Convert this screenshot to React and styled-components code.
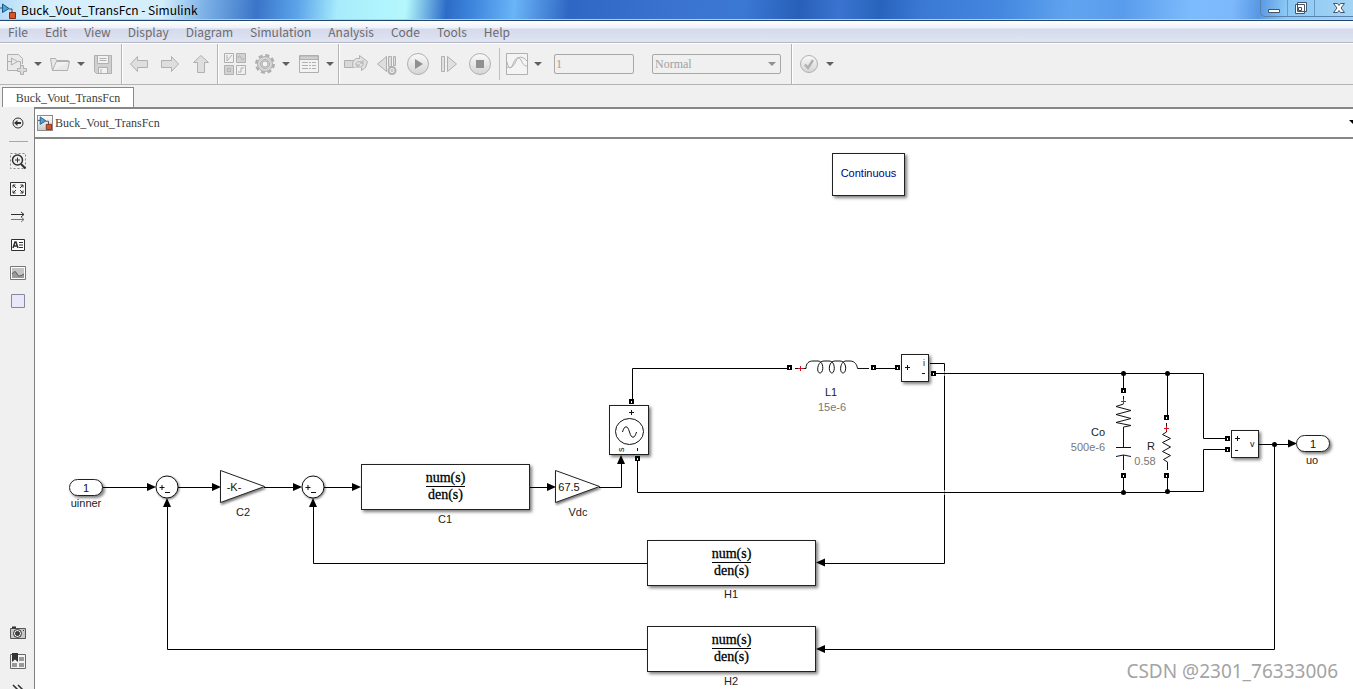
import React, { useState } from "react";
import styled, { createGlobalStyle, css } from "styled-components";

const GlobalStyle = createGlobalStyle`
  * {
    box-sizing: border-box;
  }
  body {
    margin: 0;
    background: #f0f0f0;
    font-family: "Liberation Sans", Arial, sans-serif;
  }
  button {
    padding: 0;
    border: 0;
    background: none;
    font: inherit;
    color: inherit;
  }
`;

const menus = ["File", "Edit", "View", "Display", "Diagram", "Simulation", "Analysis", "Code", "Tools", "Help"];

// the diagram is stored in window coordinates, the canvas starts here
const ORIGIN = { x: 35, y: 139 };

const labels = [
  { text: "uinner", x: 86, y: 503 },
  { text: "C2", x: 243, y: 512 },
  { text: "C1", x: 445, y: 519 },
  { text: "Vdc", x: 578, y: 512 },
  { text: "H1", x: 731, y: 594 },
  { text: "H2", x: 731, y: 681 },
  { text: "L1", x: 831, y: 392 },
  { text: "15e-6", x: 832, y: 407, param: true },
  { text: "Co", x: 1098, y: 432 },
  { text: "500e-6", x: 1088, y: 447, param: true },
  { text: "R", x: 1151, y: 446 },
  { text: "0.58", x: 1145, y: 461, param: true },
  { text: "uo", x: 1312, y: 460 },
];

const transferFcns = [
  { id: "C1", x: 361, y: 464, w: 169 },
  { id: "H1", x: 647, y: 540, w: 169 },
  { id: "H2", x: 647, y: 626, w: 169 },
];

const wires = [
  "M102 487.5H148",
  "M178 487.5H213",
  "M264 487.5H294",
  "M324 487.5H353",
  "M530 487.5H548",
  "M599 487.5H621.5V463",
  "M632.5 401V368.5H789",
  "M873 368.5H897",
  "M930 363.5H944.5V563.5H824",
  "M933 373.5H1203.5V438.5H1227",
  "M637.5 458V492.5H1167.5V491.5H1203.5V449.5H1227",
  "M1123.5 373V390M1123.5 475V492",
  "M1167.5 373V417M1167.5 475V491",
  "M1259 444.5H1289",
  "M1274.5 444V649.5H824",
  "M648 563.5H313.5V506",
  "M648 649.5H167.5V506",
];

const arrows = [
  [156, 487, 0],
  [221, 487, 0],
  [302, 487, 0],
  [361, 487, 0],
  [556, 487, 0],
  [1297, 443.5, 0],
  [621, 455, -90],
  [313, 498, -90],
  [167, 498, -90],
  [816, 562.5, 180],
  [816, 649, 180],
];

const ports = [
  [631, 401], [637, 458], [789, 367], [873, 367], [897, 367], [933, 373],
  [1123, 390], [1123, 475], [1166, 417], [1166, 475], [1227, 438], [1227, 449],
];

const dots = [[1123.5, 373.5], [1167.5, 373.5], [1123.5, 492.5], [1167.5, 491.5], [1274.5, 444.5]];

const ModelIcon = () => (
  <svg width="16" height="16" viewBox="0 0 16 16">
    <path d="M0 5h3M9 6h3v4" fill="none" stroke="#444" />
    <path d="M2.500 1v8.500L9 5.500z" fill="#4aa5d8" stroke="#1b5784" />
    <path d="M9.500 9.500h6v6h-6z" fill="#d9532a" stroke="#7d2a12" />
  </svg>
);

const CaretIcon = () => (
  <svg width="8" height="4" viewBox="0 0 8 4">
    <path d="M0 0h8L4 4z" fill="currentColor" />
  </svg>
);

const Icon = ({ children, size = 22 }) => (
  <svg width={size} height={size} viewBox={`0 0 ${size} ${size}`} fill="none" stroke="currentColor">
    {children}
  </svg>
);

const NewIcon = () => (
  <Icon>
    <path d="M17.500 12V6.500l-4-4h-11v16h11" transform="translate(-1 -1)" fill="#e9e9e9" />
    <path d="M2 8.500h3M5.500 5v7l6-3.500zM11 8.500h3.500v4" />
    <path d="M14.500 12.500h3v3h3v3h-3v3h-3v-3h-3v-3h3z" fill="#dcdcdc" />
  </Icon>
);

const OpenIcon = () => (
  <Icon>
    <path d="M3.500 17.500l-2-12h5l1 2h12v2M3.500 17.500h15l2-9h-13l-1.500 3z" fill="#e8e8e8" />
  </Icon>
);

const SaveIcon = () => (
  <Icon>
    <path d="M2.500 2.500h17v18h-15l-2-2z" fill="#d0d0d0" />
    <path d="M5.500 2.500h11v8h-11zM6.500 14.500h9v6h-9z" fill="#f2f2f2" />
    <path d="M7.500 5.500h7M7.500 7.500h7M9 16v4" />
  </Icon>
);

const ArrowIcon = ({ turn }) => (
  <Icon>
    <path d="M2.500 11l7-7.500v4h10v7h-10v4z" fill="#dedede" transform={`rotate(${turn} 11 11)`} />
  </Icon>
);

const LibraryIcon = () => (
  <Icon>
    <path d="M.500.500h9v9h-9zM12.500 12.500h9v9h-9z" />
    <path d="M12.500.500h9v9h-9zM.500 12.500h9v9h-9z" fill="#d2d2d2" />
    <path d="M3 2v6l5-6M14 5c1-4 2-2 3 0s2 3 3 0M3.500 15.500h3v3h-3zM14 19h3v-4h3" />
  </Icon>
);

const GearIcon = () => (
  <Icon>
    <circle cx="11" cy="11" r="8.500" strokeWidth="3" strokeDasharray="4 2.676" />
    <circle cx="11" cy="11" r="7.500" fill="#d6d6d6" />
    <circle cx="11" cy="11" r="4.500" />
    <circle cx="11" cy="11" r="3" fill="#f3f3f3" />
  </Icon>
);

const ExplorerIcon = () => (
  <Icon>
    <path d="M1.500 2.500h19v17h-19z" fill="#f2f2f2" />
    <path d="M2 3h18v3.500H2z" fill="#d0d0d0" />
    <path d="M4 9.500h14M4 12.500h14M4 15.500h14" strokeDasharray="6 1 2 1" />
  </Icon>
);

const UpdateIcon = () => (
  <Icon size={24}>
    <path d="M.500 8.500h11v7H.500z" fill="#d8d8d8" />
    <path d="M9.500 15.500c-2-2-1-8 3-9h3v-3l8 6-2 6-4 3v-3" fill="#e2e2e2" />
    <path d="M12 13c-1-4 6-4 7-2M19 11c1 5-6 5-6 2M19 8v3h-3M13 16v-3h3" />
  </Icon>
);

const StepBackIcon = () => (
  <Icon>
    <path d="M1.500 11l9-7.500v15zM12.500 3.500h3v10h-3zM17.500 3.500h2v9h-2z" fill="#dedede" />
    <circle cx="16" cy="17.500" r="3.500" strokeWidth="2" fill="#f0f0f0" />
    <circle cx="16" cy="17.500" r="1" />
  </Icon>
);

const RoundIcon = ({ children }) => (
  <Icon>
    <circle cx="11" cy="11" r="10.500" fill="url(#bead)" />
    {children}
  </Icon>
);

const StepIcon = () => (
  <Icon>
    <path d="M3.500 3.500h3v15h-3zM9.500 3.500v15l9-7.500z" fill="#e0e0e0" />
  </Icon>
);

const ScopeIcon = () => (
  <Icon>
    <path d="M.500.500h21v21H.500z" fill="#f4f4f4" />
    <path d="M1 9c1 6 4 8 6 2 2-5 5-9 8-4 2 4 3 6 6 6M1 14c4 2 7-1 9-6s7-5 11 0" />
  </Icon>
);

const CheckIcon = () => (
  <Icon>
    <circle cx="11" cy="11" r="8.500" fill="url(#bead)" />
    <path d="M7 11.500l3 3.500 5-8" strokeWidth="2.500" />
  </Icon>
);

const sideTop = [
  { name: "Zoom", draw: (
    <>
      <path d="M1.500 1.500h15v15h-15z" stroke="#888" strokeDasharray="2 2" />
      <circle cx="8.500" cy="8" r="5" strokeWidth="1.500" />
      <path d="M12 12l4.500 4.500" strokeWidth="2" />
      <path d="M6 8h5M8.500 5.500v5" />
    </>
  ) },
  { name: "Fit to view", draw: (
    <>
      <path d="M1.500 2.500h15v13h-15z" fill="#f8f8f8" />
      <path d="M4 7.500V5h2.500M4 5l3 3M11.500 5H14v2.500M14 5l-3 3M4 10.500V13h2.500M4 13l3-3M11.500 13H14v-2.500M14 13l-3-3" />
    </>
  ) },
  { name: "Sample time", draw: (
    <>
      <path d="M2 6.500h13M12 4l3 2.500L12 9" />
      <path d="M2 11.500h13M12 9l3 2.500-3 2.500" stroke="#777" />
    </>
  ) },
  { name: "Annotation", draw: (
    <>
      <path d="M2.500 3.500h13v11h-13z" fill="#fff" />
      <path d="M4 12l2-6h1l2 6M5 10h3" strokeWidth="1.500" />
      <path d="M10 6.500h4M10 9h4M10 11.500h4" />
    </>
  ) },
  { name: "Image", draw: (
    <>
      <path d="M1.500 2.500h15v13h-15z" stroke="#777" fill="#fff" />
      <path d="M3 4h12v10H3z" fill="#c4c4c4" stroke="none" />
      <path d="M3 14v-4c2-3 4-3 5 0s4 2 7 0v4z" fill="#9a9a9a" stroke="none" />
      <path d="M3 10c2-3 4-3 5 0s4 2 7 0" stroke="#555" />
    </>
  ) },
  { name: "Area", draw: <path d="M2.500 2.500h13v13h-13z" fill="#e8e8fa" stroke="#88889c" /> },
];

const sideBottom = [
  { name: "Screenshot", draw: (
    <>
      <path d="M1.500 4.500h15v10h-15z" fill="#c8c8c8" stroke="#555" />
      <path d="M3 3.500h4" strokeWidth="2" />
      <circle cx="8.500" cy="9.500" r="4" fill="#eee" />
      <circle cx="8.500" cy="9.500" r="2" fill="#444" />
      <path d="M14 6.500h1" />
    </>
  ) },
  { name: "Bookmarks", draw: (
    <>
      <path d="M1.500 2.500h15v14h-15z" fill="#f4f4f4" stroke="#666" />
      <path d="M10 5h5v4h-5zM3 11h5v4H3zM10 11h5v4h-5z" fill="#999" stroke="none" />
      <path d="M3 1h6v9L6 7.500 3 10z" fill="#333" stroke="none" />
    </>
  ) },
  { name: "More", draw: <path d="M4 5l5 5-5 5M9 5l5 5-5 5" strokeWidth="1.500" /> },
];

const Wiring = () => (
  <WireLayer viewBox="35 139 1318 550">
    {wires.map((d) => (
      <path key={d} d={d} stroke="#000" />
    ))}
    {/* lines passing over each other */}
    <path d="M944.500 371v2M944.500 374v2M944.500 490v2M944.500 493v2" stroke="#fff" opacity="0.600" />
    {arrows.map(([x, y, turn]) => (
      <path key={`${x}-${y}`} d="M0 0L-9 -4V4z" fill="#000" transform={`translate(${x} ${y}) rotate(${turn})`} />
    ))}
    {dots.map(([x, y]) => (
      <circle key={`${x}-${y}`} cx={x} cy={y} r="2.500" fill="#000" />
    ))}
    {ports.map(([x, y]) => (
      <g key={`${x}-${y}`}>
        <path d={`M${x - 2} ${y - 2}h5v5h-5z`} fill="#000" />
        <path d={`M${x} ${y}h1v2h-1z`} fill="#fff" />
      </g>
    ))}
    {/* inductor */}
    <path
      d="M795 368.500H806C806 363 809 361 813 361H818C824 361 824 373 820 373C816 373 817 361 824 361H829C836 361 835 373 832 373C828 373 828 361 835 361H840C847 361 847 373 843 373C839 373 840 361 846 361H850C855 361 857 365 857.500 368.500H869"
      stroke="#111"
    />
    {/* capacitor branch */}
    <path d="M1123.500 396V404L1116 406.500L1131 410.500L1116 414.500L1131 418.500L1116 422.500L1131 425.500L1123.500 427V447M1116 447.500H1131M1116 456.500Q1123.500 453.500 1131 456.500M1123.500 455V470" stroke="#111" />
    {/* load */}
    <path d="M1166.500 423V432L1162.500 434.500L1170.500 438.500L1162.500 442.500L1170.500 447L1162.500 451.500L1170.500 455.500L1163.500 459.500L1167.500 462V470" stroke="#111" />
    <path d="M798 368.500H804M800.500 366V371M1121 401.500H1126M1123.500 399V404M1164 428.500H1169M1166.500 426V431" stroke="#d01020" />
  </WireLayer>
);

const TransferFcn = ({ block }) => (
  <Block $x={block.x} $y={block.y} $w={block.w} $h={46}>
    <Fraction>
      <span>num(s)</span>
      <span>den(s)</span>
    </Fraction>
  </Block>
);

const Gain = ({ x, y, children }) => (
  <GainBox $x={x} $y={y}>
    <svg width="46" height="34" viewBox="0 0 46 34">
      <path d="M.500.500v32L44.500 16.500z" fill="#fff" stroke="#222" />
    </svg>
    <span>{children}</span>
  </GainBox>
);

const Sum = ({ x, y }) => (
  <SumBox $x={x} $y={y}>
    <svg width="24" height="24" viewBox="0 0 24 24" fill="none" stroke="#111">
      <circle cx="12" cy="12" r="11" fill="#fff" />
      <path d="M4.500 12.500h5M7 10v5M10 17.500h5" />
    </svg>
  </SumBox>
);

export default function App() {
  const [stopTime, setStopTime] = useState("1");

  return (
    <>
      <GlobalStyle />
      <Window>
        <TitleBar>
          <ModelIcon />
          <h1>Buck_Vout_TransFcn - Simulink</h1>
          <WindowButtons>
            <button aria-label="Minimize">
              <svg width="14" height="14" viewBox="0 0 14 14" fill="#fff" stroke="#42536a">
                <path d="M1.500 8.500h11v3h-11z" />
              </svg>
            </button>
            <button aria-label="Restore">
              <svg width="14" height="14" viewBox="0 0 14 14" fill="#fff" stroke="#42536a">
                <path d="M3.500 1.500h9v9h-9zM1.500 3.500h9v9h-9zM4.500 6.500h3v3h-3z" />
              </svg>
            </button>
            <button aria-label="Close">
              <svg width="14" height="14" viewBox="0 0 14 14" fill="#fff" stroke="#42536a">
                <path d="M1.500 2.500h4L7 4.500l1.500-2h4L9 7l3.500 4.500h-4L7 9.500l-1.500 2h-4L5 7z" />
              </svg>
            </button>
          </WindowButtons>
        </TitleBar>
        <MenuBar>
          {menus.map((menu) => (
            <button key={menu}>{menu}</button>
          ))}
        </MenuBar>
        <Toolbar>
          <svg width="0" height="0">
            <linearGradient id="bead" x2="0" y2="1">
              <stop offset="0" stopColor="#fafafa" />
              <stop offset="1" stopColor="#d4d4d4" />
            </linearGradient>
          </svg>
          <ToolGroup $gap={7} $end={7}>
            <Split>
              <ToolButton aria-label="New model"><NewIcon /></ToolButton>
              <CaretButton aria-label="New options"><CaretIcon /></CaretButton>
            </Split>
            <Split>
              <ToolButton aria-label="Open"><OpenIcon /></ToolButton>
              <CaretButton aria-label="Open options"><CaretIcon /></CaretButton>
            </Split>
            <ToolButton aria-label="Save"><SaveIcon /></ToolButton>
          </ToolGroup>
          <ToolGroup $gap={9} $end={5}>
            <ToolButton aria-label="Back"><ArrowIcon turn={0} /></ToolButton>
            <ToolButton aria-label="Forward"><ArrowIcon turn={180} /></ToolButton>
            <ToolButton aria-label="Up to parent"><ArrowIcon turn={90} /></ToolButton>
          </ToolGroup>
          <ToolGroup $gap={8} $end={4}>
            <ToolButton aria-label="Library browser"><LibraryIcon /></ToolButton>
            <Split>
              <ToolButton aria-label="Model configuration"><GearIcon /></ToolButton>
              <CaretButton aria-label="Configuration options"><CaretIcon /></CaretButton>
            </Split>
            <Split>
              <ToolButton aria-label="Model explorer"><ExplorerIcon /></ToolButton>
              <CaretButton aria-label="Explorer options"><CaretIcon /></CaretButton>
            </Split>
          </ToolGroup>
          <ToolGroup $gap={9} $end={8} $open>
            <ToolButton aria-label="Update diagram"><UpdateIcon /></ToolButton>
            <ToolButton aria-label="Step back"><StepBackIcon /></ToolButton>
            <ToolButton aria-label="Run">
              <RoundIcon><path d="M8 6v10l8-5z" fill="#909090" stroke="none" /></RoundIcon>
            </ToolButton>
            <ToolButton aria-label="Step forward"><StepIcon /></ToolButton>
            <ToolButton aria-label="Stop">
              <RoundIcon><path d="M7 7h8v8H7z" fill="#909090" stroke="none" /></RoundIcon>
            </ToolButton>
          </ToolGroup>
          <ShortRule />
          <ToolGroup $gap={12} $end={10}>
            <Split>
              <ToolButton aria-label="Data inspector"><ScopeIcon /></ToolButton>
              <CaretButton aria-label="Inspector options"><CaretIcon /></CaretButton>
            </Split>
            <Fields>
              <StopTime aria-label="Stop time" value={stopTime} onChange={(e) => setStopTime(e.target.value)} />
              <ModeSelect>
                <select aria-label="Simulation mode">
                  <option>Normal</option>
                </select>
                <CaretIcon />
              </ModeSelect>
            </Fields>
          </ToolGroup>
          <ToolGroup $gap={7} $end={6} $open>
            <Split>
              <ToolButton aria-label="Model advisor"><CheckIcon /></ToolButton>
              <CaretButton aria-label="Advisor options"><CaretIcon /></CaretButton>
            </Split>
          </ToolGroup>
        </Toolbar>
        <TabStrip>
          <Tab>Buck_Vout_TransFcn</Tab>
        </TabStrip>
        <Body>
          <Sidebar>
            <SideGroup>
              <SideButton aria-label="Hide browser">
                <Icon size={18}>
                  <circle cx="9" cy="9" r="5" />
                  <path d="M12 9H6" strokeWidth="2" />
                  <path d="M5 9l3.500-3v6z" fill="currentColor" stroke="none" />
                </Icon>
              </SideButton>
              <SideRule />
              {sideTop.map((tool) => (
                <SideButton key={tool.name} aria-label={tool.name}>
                  <Icon size={18}>{tool.draw}</Icon>
                </SideButton>
              ))}
            </SideGroup>
            <SideGroup $bottom>
              {sideBottom.map((tool) => (
                <SideButton key={tool.name} aria-label={tool.name}>
                  <Icon size={18}>{tool.draw}</Icon>
                </SideButton>
              ))}
            </SideGroup>
          </Sidebar>
          <Editor>
            <Breadcrumb>
              <CrumbIcon><ModelIcon /></CrumbIcon>
              <span>Buck_Vout_TransFcn</span>
              <button aria-label="Model history"><CaretIcon /></button>
            </Breadcrumb>
            <Canvas>
              <Wiring />
              <Block $x={832} $y={153} $w={73} $h={43} $link>Continuous</Block>
              {transferFcns.map((block) => (
                <TransferFcn key={block.id} block={block} />
              ))}
              <Block $x={69} $y={479} $w={34} $h={17} $round>1</Block>
              <Block $x={1296} $y={435} $w={34} $h={17} $round>1</Block>
              <Sum x={155} y={475} />
              <Sum x={301} y={475} />
              <Gain x={220} y={470}>-K-</Gain>
              <Gain x={555} y={470}>67.5</Gain>
              <Block $x={609} $y={405} $w={40} $h={50}>
                <svg width="38" height="48" viewBox="0 0 38 48" fill="none" stroke="#111">
                  <path d="M19 6.500h5M21.500 4v5M27.500 42v3" />
                  <ellipse cx="19.500" cy="25.500" rx="14" ry="13" />
                  <path d="M12.500 26c2-7 5-7 7 0s5 7 7 0" />
                  <PortText x="-46" y="14" transform="rotate(-90)">s</PortText>
                </svg>
              </Block>
              <Block $x={901} $y={354} $w={28} $h={28}>
                <svg width="26" height="26" viewBox="0 0 26 26" fill="none" stroke="#111">
                  <path d="M3 12.500h5M5.500 10v5M20 18.500h3" />
                  <PortText x="21" y="11">i</PortText>
                </svg>
              </Block>
              <Block $x={1231} $y={430} $w={28} $h={28}>
                <svg width="26" height="26" viewBox="0 0 26 26" fill="none" stroke="#111">
                  <path d="M3 7.500h5M5.500 5v5M3 19.500h3" />
                  <PortText x="18" y="16">v</PortText>
                </svg>
              </Block>
              {labels.map((label) => (
                <Label key={label.text} $x={label.x} $y={label.y} $param={label.param}>
                  {label.text}
                </Label>
              ))}
              <Watermark>CSDN @2301_76333006</Watermark>
            </Canvas>
          </Editor>
        </Body>
      </Window>
    </>
  );
}

const Window = styled.div`
  display: flex;
  flex-direction: column;
  height: 100vh;
  overflow: hidden;
`;

const TitleBar = styled.header`
  display: flex;
  align-items: center;
  flex: none;
  height: 21px;
  gap: 5px;
  border-bottom: 1px solid #24466e;
  box-shadow: inset 0 -1px #a8d0f4;
  background: linear-gradient(
    95deg,
    #b4dcf8 0%,
    #d8f0fc 3%,
    #d4eefc 12%,
    #7fb4e8 15%,
    #3a74c8 19%,
    #5ba4ea 22%,
    #a8ecfc 25%,
    #b4f8fc 30%,
    #2c6cc8 33%,
    #3f86de 35%,
    #6ab4f8 38%,
    #2f68c4 42%,
    #3a74d0 50%,
    #3a78d4 55%,
    #2860b8 59%,
    #3a74d0 62%,
    #2864bc 65%,
    #3a78d4 68%,
    #4488e0 74%,
    #60a4f0 79%,
    #5a9cec 83%,
    #7cbcfc 88%,
    #7cb8fc 91%,
    #5898e4 93%,
    #8cc8f4 95%,
    #a4d4f4 100%
  );
  h1 {
    flex: 1;
    margin: 0;
    font: 12px/20px "Noto Sans CJK SC", "Noto Sans", sans-serif;
    color: #000;
  }
  > svg {
    flex: none;
    margin-top: 2px;
  }
`;

const WindowButtons = styled.div`
  display: flex;
  align-self: flex-start;
  height: 17px;
  border: 1px solid #5782b0;
  border-width: 0 0 1px 1px;
  border-radius: 0 0 0 5px;
  button {
    display: flex;
    align-items: center;
    justify-content: center;
    width: 27px;
    border-right: 1px solid #6c98c4;
  }
  button:last-child {
    width: 38px;
    padding-left: 10px;
    border-right: 0;
  }
`;

const MenuBar = styled.nav`
  display: flex;
  flex: none;
  gap: 17px;
  height: 22px;
  padding: 0 8px;
  border-bottom: 1px solid #b4b7c4;
  background: linear-gradient(#fff 0, #eef1f9 7px, #d4daec 8px, #e0e4f2 21px);
  font: 12px/22px "Noto Sans CJK SC", "Noto Sans", sans-serif;
  color: #6b6b6f;
`;

const Toolbar = styled.div`
  display: flex;
  align-items: center;
  flex: none;
  height: 42px;
  border-top: 1px solid #fff;
  border-bottom: 1px solid #b4b4b4;
  background: #f0f0f0;
  > svg {
    position: absolute;
  }
`;

const ToolGroup = styled.div`
  display: flex;
  align-items: center;
  align-self: stretch;
  gap: ${(p) => p.$gap}px;
  padding: 0 ${(p) => p.$end}px 0 6px;
  ${(p) =>
    !p.$open &&
    css`
      border-right: 1px solid #b4b4b4;
      box-shadow: 1px 0 #fff;
    `}
`;

const Split = styled.div`
  display: flex;
  align-items: center;
  gap: 6px;
`;

const ToolButton = styled.button`
  display: flex;
  align-items: center;
  justify-content: center;
  width: 22px;
  height: 24px;
  color: #b0b0b0;
  svg {
    flex: none;
  }
`;

const CaretButton = styled.button`
  display: flex;
  justify-content: center;
  width: 8px;
  color: #606060;
`;

const ShortRule = styled.span`
  width: 1px;
  height: 32px;
  background: #c0c0c0;
`;

const Fields = styled.div`
  display: flex;
  gap: 18px;
`;

const field = css`
  height: 20px;
  padding: 0 1px;
  border: 1px solid #a8a8a8;
  border-radius: 2px;
  background: #f0f0f0;
  font: 12px "Liberation Serif", serif;
  color: #a0a0a0;
`;

const StopTime = styled.input`
  ${field}
  width: 80px;
`;

const ModeSelect = styled.div`
  position: relative;
  select {
    ${field}
    display: block;
    width: 129px;
    padding-left: 2px;
    appearance: none;
  }
  svg {
    position: absolute;
    top: 8px;
    right: 5px;
    color: #909090;
    pointer-events: none;
  }
`;

const TabStrip = styled.div`
  display: flex;
  align-items: flex-end;
  flex: none;
  height: 22px;
  padding-left: 2px;
  background: #f0f0f0;
`;

const Tab = styled.button`
  width: 132px;
  height: 20px;
  border: 1px solid #888;
  border-bottom: 0;
  background: #fff;
  font: 12px/20px "Liberation Serif", serif;
  color: #404040;
`;

const Body = styled.div`
  display: flex;
  flex: 1;
  min-height: 0;
`;

const Sidebar = styled.aside`
  display: flex;
  flex-direction: column;
  justify-content: space-between;
  flex: none;
  width: 34px;
  padding-top: 2px;
  background: #f0f0f0;
`;

const SideGroup = styled.div`
  display: flex;
  flex-direction: column;
  align-items: center;
  padding-left: 2px;
  margin-bottom: ${(p) => (p.$bottom ? "-14px" : "0")};
`;

const SideButton = styled.button`
  display: flex;
  align-items: center;
  justify-content: center;
  width: 28px;
  height: 28px;
  color: #303030;
`;

const SideRule = styled.hr`
  width: 19px;
  height: 1px;
  margin: 4px 0 5px;
  border: 0;
  background: #a8a8a8;
`;

const Editor = styled.main`
  display: flex;
  flex-direction: column;
  flex: 1;
  min-width: 0;
  border-left: 1px solid #808080;
`;

const Breadcrumb = styled.div`
  display: flex;
  align-items: center;
  flex: none;
  gap: 2px;
  height: 32px;
  padding-left: 2px;
  overflow: hidden;
  border: solid #868686;
  border-width: 2px 0;
  background: #fff;
  font: 12px/16px "Liberation Serif", serif;
  color: #404040;
  button {
    display: flex;
    margin: 0 -4px 3px auto;
    color: #000;
  }
`;

const CrumbIcon = styled.span`
  display: flex;
  align-items: center;
  justify-content: center;
  width: 16px;
  height: 16px;
  border: 1px solid #8a8a8a;
  background: linear-gradient(#fff, #ccc);
  svg {
    width: 14px;
    height: 14px;
  }
`;

const Canvas = styled.section`
  position: relative;
  flex: 1;
  min-height: 0;
  overflow: hidden;
  background: #fff;
`;

const WireLayer = styled.svg`
  position: absolute;
  top: 0;
  left: 0;
  width: 1318px;
  height: 550px;
  fill: none;
`;

const PortText = styled.text`
  fill: #111;
  stroke: none;
  font-size: 9px;
`;

const placed = css`
  position: absolute;
  left: ${(p) => p.$x - ORIGIN.x}px;
  top: ${(p) => p.$y - ORIGIN.y}px;
`;

const Block = styled.div`
  ${placed}
  display: flex;
  align-items: center;
  justify-content: center;
  width: ${(p) => p.$w}px;
  height: ${(p) => p.$h}px;
  padding-bottom: ${(p) => (p.$link ? "3px" : "0")};
  border: 1px solid #222;
  border-radius: ${(p) => (p.$round ? "9px" : "0")};
  background: #fff;
  box-shadow: 2px 2px 3px rgba(0, 0, 0, 0.5);
  font-size: 11px;
  color: ${(p) => (p.$link ? "#000080" : "#111")};
  svg {
    flex: none;
  }
`;

const Fraction = styled.div`
  display: flex;
  flex-direction: column;
  align-items: center;
  padding-bottom: 1px;
  font: 14px/16px "Liberation Serif", serif;
  color: #000;
  -webkit-text-stroke: 0.3px #000;
  span:first-child {
    border-bottom: 1px solid #000;
  }
`;

const GainBox = styled.div`
  ${placed}
  width: 46px;
  height: 34px;
  font-size: 11px;
  line-height: 34px;
  color: #111;
  svg {
    position: absolute;
    top: 0;
    left: 0;
    overflow: visible;
    filter: drop-shadow(1px 2px 1px rgba(0, 0, 0, 0.5));
  }
  span {
    display: block;
    position: relative;
    width: 28px;
    text-align: center;
  }
`;

const SumBox = styled.div`
  ${placed}
  svg {
    display: block;
    overflow: visible;
    filter: drop-shadow(1px 1px 1px rgba(0, 0, 0, 0.5));
  }
`;

const Label = styled.span`
  ${placed}
  width: 60px;
  margin: -7px 0 0 -30px;
  font-size: 11px;
  line-height: 14px;
  text-align: center;
  color: ${(p) => (p.$param ? "#777" : "#222")};
`;

const Watermark = styled.span`
  position: absolute;
  right: 15px;
  bottom: 4px;
  font: 19px/28px "Noto Sans", sans-serif;
  color: #a4a4a4;
`;
